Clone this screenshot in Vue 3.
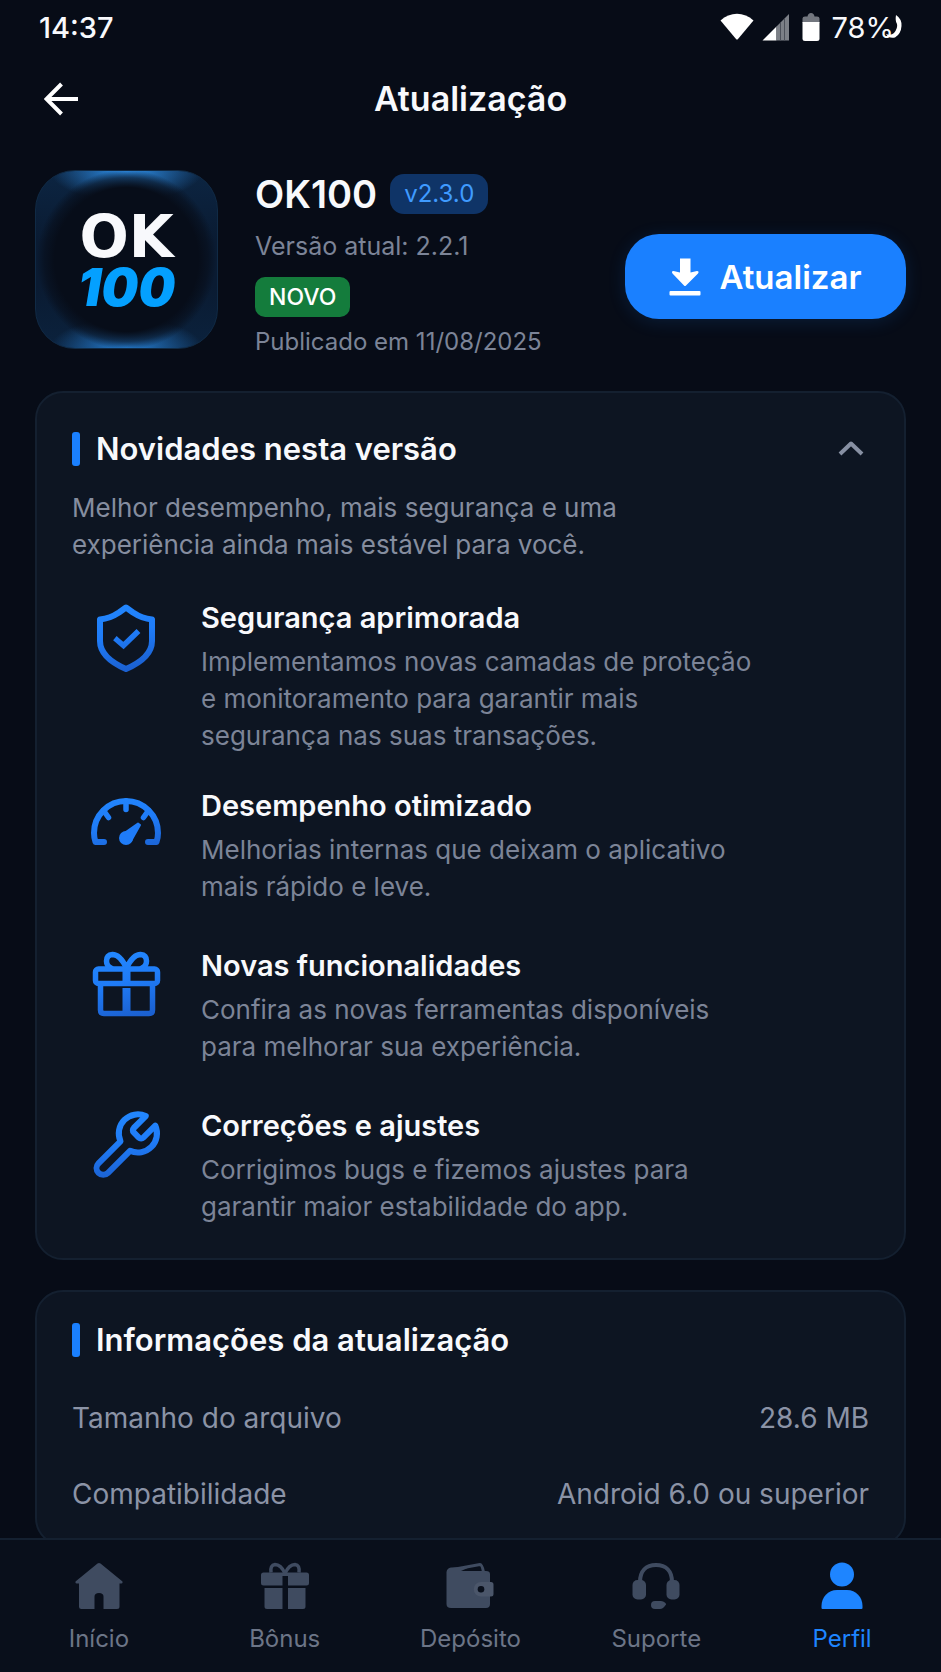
<script setup>
import { ref } from 'vue'

const open = ref(true)

const features = [
  {
    id: 'shield',
    title: 'Segurança aprimorada',
    text: 'Implementamos novas camadas de proteção e monitoramento para garantir mais segurança nas suas transações.',
  },
  {
    id: 'gauge',
    title: 'Desempenho otimizado',
    text: 'Melhorias internas que deixam o aplicativo mais rápido e leve.',
  },
  {
    id: 'gift',
    title: 'Novas funcionalidades',
    text: 'Confira as novas ferramentas disponíveis para melhorar sua experiência.',
  },
  {
    id: 'wrench',
    title: 'Correções e ajustes',
    text: 'Corrigimos bugs e fizemos ajustes para garantir maior estabilidade do app.',
  },
]

const details = [
  { label: 'Tamanho do arquivo', value: '28.6 MB' },
  { label: 'Compatibilidade', value: 'Android 6.0 ou superior' },
]

const tabs = [
  { id: 'home', label: 'Início' },
  { id: 'bonus', label: 'Bônus' },
  { id: 'wallet', label: 'Depósito' },
  { id: 'support', label: 'Suporte' },
  { id: 'profile', label: 'Perfil', active: true },
]
</script>

<template>
  <div class="screen">
    <div class="status">
      <span class="clock">14:37</span>
      <div class="indicators">
        <svg class="wifi" viewBox="0 0 34 28" aria-hidden="true">
          <path d="M0.5 7.5C10 -1.5 24 -1.5 33.5 7.5L18 26Q17 27 16 26Z" fill="#fff" />
        </svg>
        <svg class="signal" viewBox="0 0 28 28" aria-hidden="true">
          <path d="M0.5 27.5L14.5 13.5V27.5Z" fill="#fff" />
          <path d="M14.5 13.5L27 1V27.5H14.5Z" fill="#7c8087" />
          <path d="M18.5 10V27.5M22.5 6V27.5" stroke="#4c515a" stroke-width="1" />
        </svg>
        <svg class="battery" viewBox="0 0 18 28" aria-hidden="true">
          <path d="M0.5 10V5.5Q0.5 3.5 3 3.5H5.5Q6 0 9 0T12.5 3.5H15Q17.5 3.5 17.5 5.5V10Z" fill="#72767e" />
          <path d="M0.5 9H17.5V25.5Q17.5 28 15 28H3Q0.5 28 0.5 25.5Z" fill="#fff" />
        </svg>
        <span class="percent">78%</span>
        <svg class="charge" viewBox="0 0 18 26" aria-hidden="true">
          <path d="M12 1Q18 5 17.5 12Q17 20 11 23.500Q5 25 2 20Q7 22 10 19Q14 14 13 10Q11 7 12 1Z" fill="#fff" />
        </svg>
      </div>
    </div>

    <header class="topbar">
      <button class="icon-button back" type="button" aria-label="Voltar">
        <svg viewBox="0 0 36 34" aria-hidden="true">
          <path d="M34 17H3M17.5 2L2.5 17L17.5 32" fill="none" stroke="#fff" stroke-width="4" />
        </svg>
      </button>
      <h1>Atualização</h1>
    </header>

    <main class="content">
      <section class="app">
        <div class="logo">
          <span class="logo-ok">OK</span>
          <span class="logo-num">100</span>
        </div>
        <div class="meta">
          <div class="name-row">
            <h2 class="name">OK100</h2>
            <span class="version">v2.3.0</span>
          </div>
          <p class="current">Versão atual: 2.2.1</p>
          <span class="tag">NOVO</span>
          <p class="date">Publicado em 11/08/2025</p>
        </div>
        <button class="update" type="button">
          <svg viewBox="0 0 32 38" aria-hidden="true">
            <path d="M11 0.5H21.5V14.5L28 13Q30.5 13 29 15.5L17 27.5Q16 28.5 15 27.5L3.5 15.5Q2 13 4.5 13L11 14.5Z" fill="#fff" />
            <rect x="0.5" y="33" width="31" height="4.5" rx="1" fill="#fff" />
          </svg>
          Atualizar
        </button>
      </section>

      <section class="card news">
        <div class="card-head">
          <h2>Novidades nesta versão</h2>
          <button
            class="icon-button toggle"
            type="button"
            aria-label="Mostrar ou ocultar novidades"
            :aria-expanded="open"
            @click="open = !open"
          >
            <svg viewBox="0 0 28 18" :class="{ flipped: !open }" aria-hidden="true">
              <path d="M3 14L14 3.5L25 14" fill="none" stroke="#8790a3" stroke-width="4" stroke-linejoin="round" />
            </svg>
          </button>
        </div>
        <template v-if="open">
          <p class="lead">Melhor desempenho, mais segurança e uma experiência ainda mais estável para você.</p>
          <ul class="features">
            <li v-for="f in features" :key="f.id" class="feature">
              <svg class="feature-icon" viewBox="0 0 72 72" aria-hidden="true">
                <defs>
                  <linearGradient
                    :id="'tone-' + f.id"
                    gradientUnits="userSpaceOnUse"
                    x1="6"
                    y1="0"
                    :x2="f.id === 'wrench' ? 8 : 22"
                    :y2="f.id === 'wrench' ? 23 : 72"
                  >
                    <stop offset="0" stop-color="#2389ff" />
                    <stop offset="0.5" stop-color="#1f7cf8" />
                    <stop offset="1" stop-color="#1b60d0" />
                  </linearGradient>
                </defs>
                <g :stroke="`url(#tone-${f.id})`" fill="none" stroke-linejoin="round" stroke-linecap="round">
                  <g v-if="f.id === 'shield'" stroke-width="6">
                    <path d="M36 5.5L29 10.5Q20 16.500 10 17.5V39C10 51 20 60 36 67C52 60 62 51 62 39V17.5Q52 16.500 43 10.5Z" />
                    <path d="M27 38L33.5 43.5L46.500 31" stroke-width="5.5" stroke-linecap="square" stroke-linejoin="miter" />
                  </g>
                  <g v-else-if="f.id === 'gauge'" stroke-width="6">
                    <path d="M14 52H5.5Q4 48 4 43A32 32 0 0 1 68 43Q68 48 66.500 52H58" />
                    <path d="M36 11V19.5M13.5 20.5L18.5 27.5M58.5 20.5L53.500 27.5" stroke-width="5.5" />
                    <g fill="#1f7cf8" stroke="#1f7cf8">
                      <circle cx="36" cy="48" r="7" stroke="none" />
                      <path d="M33 44L48 33.5L50 35L41 51Z" stroke-width="2" />
                    </g>
                  </g>
                  <g v-else-if="f.id === 'gift'" stroke-width="5.5">
                    <rect x="5.5" y="19" width="62" height="14.5" rx="3" />
                    <path d="M10.5 35V60Q10.5 63.5 14 63.5H59Q62.5 63.5 62.5 60V35" />
                    <path d="M36.5 20V33M36.5 38V62" stroke-width="8" stroke-linecap="butt" />
                    <path d="M36.5 18Q30 4.5 22.5 4.5Q16.5 5 16.5 11Q16.5 16 21 18M36.5 18Q43 4.5 50.5 4.5Q56.5 5 56.5 11Q56.5 16 52 18" />
                  </g>
                  <path
                    v-else
                    transform="translate(-3 -2) scale(3.18)"
                    stroke-width="1.9"
                    d="M14.7 6.3a1 1 0 0 0 0 1.4l1.6 1.6a1 1 0 0 0 1.4 0l3.77-3.77a6 6 0 0 1-7.94 7.94l-6.91 6.91a2.12 2.12 0 0 1-3-3l6.91-6.91a6 6 0 0 1 7.94-7.94l-3.76 3.76z"
                  />
                </g>
              </svg>
              <div class="feature-body">
                <h3>{{ f.title }}</h3>
                <p>{{ f.text }}</p>
              </div>
            </li>
          </ul>
        </template>
      </section>

      <section class="card info">
        <div class="card-head">
          <h2>Informações da atualização</h2>
        </div>
        <dl class="details">
          <div v-for="d in details" :key="d.label" class="detail">
            <dt>{{ d.label }}</dt>
            <dd>{{ d.value }}</dd>
          </div>
        </dl>
      </section>
    </main>

    <nav class="tabs" aria-label="Principal">
      <a v-for="t in tabs" :key="t.id" :href="'#' + t.id" class="tab" :class="{ active: t.active }" :aria-current="t.active ? 'page' : undefined">
        <svg viewBox="0 0 48 48" fill="currentColor" aria-hidden="true">
          <path
            v-if="t.id === 'home'"
            d="M22.5 1.5Q24 0.3 25.5 1.5L47.5 19.5Q48 21.5 46.5 21.5H44.5V44.5Q44.5 47 42 47H28.5V34.5Q28.5 31 24 31T19.5 34.5V47H6.5Q4 47 4 44.5V21.5H1.5Q0 21.5 0.5 19.5Z"
          />
          <template v-else-if="t.id === 'bonus'">
            <path d="M2.5 10.5H45.5Q48 10.5 48 13V21Q48 23.5 45.5 23.5H27V14H21.5V23.5H2.5Q0 23.5 0 21V13Q0 10.5 2.5 10.5Z" />
            <path d="M3.5 26H21.5V47H6Q3.5 47 3.5 44.5ZM27 26H44.5V44.5Q44.5 47 42 47H27Z" />
            <path d="M24 11.5Q20 2.5 14 2.5Q9 3 10 10.5M24 11.5Q28 2.5 34 2.5Q39 3 38 10.5" fill="none" stroke="currentColor" stroke-width="3.5" />
          </template>
          <template v-else-if="t.id === 'wallet'">
            <path d="M4 8L34 2.5Q36 2.5 37.5 10" fill="none" stroke="currentColor" stroke-width="3" stroke-linejoin="round" />
            <path d="M5 5.5Q1 6 0.5 10V42Q0.5 46 5 46H40Q44 46 44 42V12Q44 9 40 9H15L24 5Z" />
            <path
              fill-rule="evenodd"
              d="M35 20H45Q47.5 20 47.5 22.5V32Q47.5 34.5 45 34.5H35A7.25 7.25 0 0 1 35 20ZM35 24A3.25 3.25 0 1 0 35 30.5A3.25 3.25 0 1 0 35 24Z"
              fill="#4b566a"
            />
            <circle cx="35" cy="27.3" r="3.3" fill="#090f1b" />
          </template>
          <template v-else-if="t.id === 'support'">
            <path d="M8 20C8 9 14 3 24 3S40 9 40 20" fill="none" stroke="currentColor" stroke-width="4" />
            <rect x="0.5" y="18" width="13.5" height="19.5" rx="5" />
            <rect x="34.5" y="18" width="13" height="19.5" rx="5" />
            <path d="M23 39H29Q34 40 34 42.5Q31 47 28 47H23A4 4 0 0 1 23 39Z" />
          </template>
          <template v-else>
            <circle cx="24" cy="12.5" r="12" />
            <path d="M3.5 46V44C3.5 35 10 28 19 28H29C38 28 44.5 35 44.5 44V46Q44.5 47 43.5 47H4.5Q3.5 47 3.5 46Z" />
          </template>
        </svg>
        <span>{{ t.label }}</span>
      </a>
    </nav>
  </div>
</template>

<style>
body {
  background: #070c17;
}
</style>

<style scoped>
.screen {
  display: flex;
  flex-direction: column;
  height: 100vh;
  background: #070c17;
  color: #f8f9fc;
  font-family: Inter, "Liberation Sans", sans-serif;
}

h1, h2, h3, p, ul, dl, dd {
  margin: 0;
  padding: 0;
}

svg {
  display: block;
  flex: none;
}

button {
  font: inherit;
  color: inherit;
  border: 0;
  cursor: pointer;
}

.status {
  flex: none;
  display: flex;
  justify-content: space-between;
  align-items: center;
  height: 54px;
  padding: 0 39px;
  font-size: 29px;
  font-weight: 500;
}

.indicators {
  display: flex;
  align-items: center;
}

.wifi { width: 34px; height: 28px; margin-right: 8px; }
.signal { width: 28px; height: 28px; margin-right: 12px; }
.battery { width: 18px; height: 28px; margin-right: 12px; }
.percent { font-weight: 400; }
.charge { width: 18px; height: 26px; margin-left: -10px; }

.topbar {
  flex: none;
  position: relative;
  display: flex;
  align-items: center;
  justify-content: center;
  height: 90px;
}

.topbar h1 {
  font-size: 34px;
  line-height: 40px;
  font-weight: 600;
}

.icon-button {
  display: flex;
  align-items: center;
  justify-content: center;
  padding: 0;
  background: none;
}

.back {
  position: absolute;
  left: 38px;
  width: 48px;
  height: 48px;
}

.back svg { width: 36px; height: 34px; }

.content {
  flex: 1;
  min-height: 0;
  overflow-y: auto;
  scrollbar-width: none;
  padding: 26px 35px 24px;
}

.app {
  display: flex;
  align-items: flex-start;
}

.logo {
  flex: none;
  display: flex;
  flex-direction: column;
  align-items: center;
  justify-content: center;
  width: 183px;
  height: 179px;
  padding-top: 5px;
  border-radius: 40px;
  box-sizing: border-box;
  border: 1px solid #102a45;
  background:
    radial-gradient(circle at 50% 50%, #070d19 0, #070d19 72px, rgba(7, 13, 25, 0.6) 82px, rgba(7, 13, 25, 0) 90px),
    radial-gradient(ellipse 76px 30px at 50% 0, #2f92ee, rgba(30, 110, 190, 0)),
    radial-gradient(ellipse 76px 30px at 50% 100%, #2680d6, rgba(30, 110, 190, 0)),
    linear-gradient(#0c2542, #0a1b32 40%, #0a1b32 65%, #0b223d);
}

.logo-ok {
  font-family: "DejaVu Sans", sans-serif;
  font-size: 58px;
  line-height: 52px;
  font-weight: 700;
}

.logo-num {
  font-size: 52px;
  line-height: 50px;
  font-weight: 900;
  font-style: italic;
  color: #04a0ff;
}

.meta {
  flex: 1;
  display: flex;
  flex-direction: column;
  align-items: flex-start;
  padding: 4px 0 0 37px;
}

.name-row {
  display: flex;
  align-items: center;
  gap: 13px;
  height: 40px;
}

.name {
  font-size: 38px;
  line-height: 40px;
  font-weight: 600;
}

.version {
  padding: 0 14px;
  border-radius: 14px;
  background: #0f3467;
  color: #3f9bff;
  font-size: 24px;
  line-height: 40px;
}

.current,
.date {
  color: #7c8497;
  font-size: 25px;
  line-height: 30px;
}

.current { margin: 17px 0 16px; }

.tag {
  padding: 0 14px;
  border-radius: 10px;
  background: #147c3c;
  color: #fff;
  font-size: 23px;
  line-height: 40px;
  font-weight: 500;
}

.date {
  margin-top: 10px;
  font-size: 24px;
}

.update {
  flex: none;
  display: flex;
  align-items: center;
  justify-content: center;
  gap: 18px;
  width: 281px;
  height: 85px;
  margin-top: 64px;
  border-radius: 34px;
  background: #1a80ff;
  box-shadow: 0 3px 18px rgba(26, 128, 255, 0.14);
  color: #fff;
  font-size: 33px;
  font-weight: 600;
}

.update svg { width: 32px; height: 38px; }

.card {
  border: 2px solid #142030;
  border-radius: 28px;
  background: #0d1522;
}

.news {
  margin-top: 34px;
  padding: 38px 35px 24px;
}

.card-head {
  display: flex;
  align-items: center;
  justify-content: space-between;
  height: 36px;
}

.card-head h2 {
  display: flex;
  align-items: center;
  gap: 16px;
  font-size: 31px;
  line-height: 36px;
  font-weight: 600;
}

.card-head h2::before {
  content: "";
  width: 8px;
  height: 34px;
  border-radius: 3px;
  background: #1a80ff;
}

.toggle {
  width: 36px;
  height: 36px;
}

.toggle svg { width: 28px; height: 18px; }
.flipped { transform: rotate(180deg); }

.lead {
  max-width: 600px;
  margin-top: 22px;
  color: #858d9f;
  font-size: 26px;
  line-height: 37px;
}

.features {
  display: flex;
  flex-direction: column;
  gap: 34px;
  margin-top: 37px;
  padding-left: 18px;
  list-style: none;
}

.feature {
  display: flex;
  align-items: flex-start;
  gap: 39px;
  min-height: 126px;
}

.feature-icon {
  width: 72px;
  height: 76px;
}

.feature-body { max-width: 556px; }

.feature h3 {
  font-size: 29px;
  line-height: 36px;
  font-weight: 600;
}

.feature p {
  margin-top: 7px;
  color: #7c8497;
  font-size: 26px;
  line-height: 37px;
}

.info {
  margin-top: 30px;
  padding: 30px 35px 12px;
}

.details { margin-top: 22px; }

.detail {
  display: flex;
  align-items: center;
  justify-content: space-between;
  height: 76px;
  color: #8b93a6;
  font-size: 28px;
}

.tabs {
  flex: none;
  display: flex;
  height: 132px;
  padding: 0 6px;
  border-top: 2px solid #142030;
  background: #090f1b;
}

.tab {
  flex: 1;
  display: flex;
  flex-direction: column;
  align-items: center;
  padding-top: 22px;
  color: #3f4b60;
  font-size: 24px;
  line-height: 30px;
  text-decoration: none;
}

.tab svg {
  width: 48px;
  height: 48px;
  margin-bottom: 14px;
}

.tab span { color: #6c7587; }

.tab.active,
.tab.active span { color: #1e85ff; }
</style>
